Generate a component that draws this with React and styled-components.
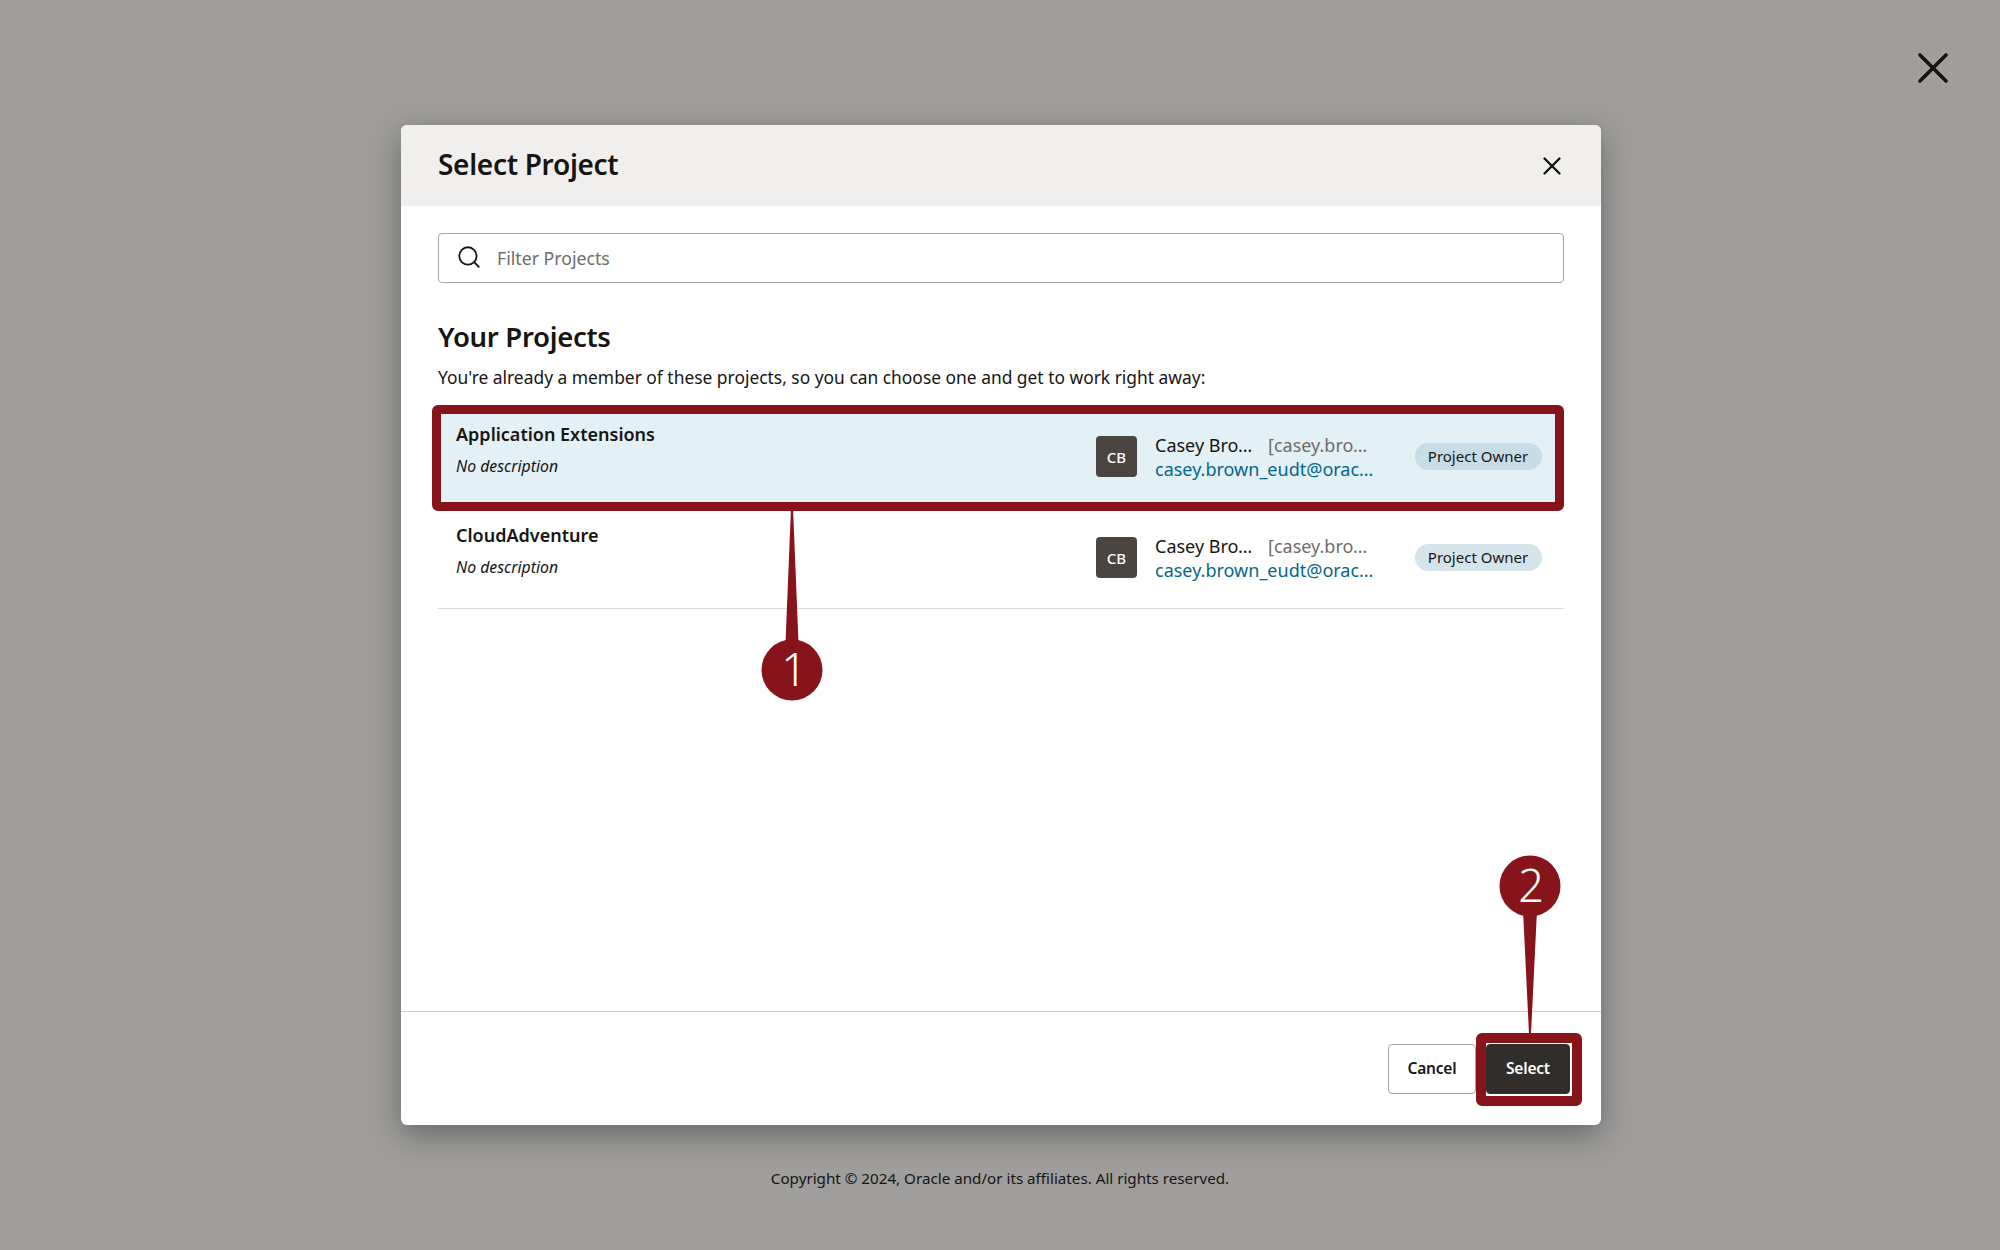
import React from 'react'
import styled, { createGlobalStyle } from 'styled-components'
import { Search, X } from 'lucide-react'

const colors = {
	scrim: '#9f9e9c',
	text: '#161513',
	muted: '#6f6c69',
	line: '#dcdbd9',
	red: '#86141a',
	dark: '#312d2a',
	link: '#04678a',
}

const GlobalStyle = createGlobalStyle`
	html, body {
		margin: 0;
		padding: 0;
		height: 100%;
	}

	body {
		background: ${colors.scrim};
		color: ${colors.text};
		font-family: "Noto Sans", "Open Sans", sans-serif;
	}
`

const Page = styled.div`
	align-items: center;
	box-sizing: border-box;
	display: flex;
	flex-direction: column;
	height: 1250px;
	overflow: hidden;
	padding-top: 125px;
	position: relative;
`

const PageClose = styled.button`
	background: none;
	border: 0;
	color: #161513;
	display: flex;
	padding: 0;
	position: absolute;
	right: 41px;
	top: 42px;
`

const Modal = styled.div`
	background: #fff;
	border-radius: 6px;
	box-shadow: 0 10px 32px rgba(0, 0, 0, 0.35);
	display: flex;
	flex-direction: column;
	height: 1000px;
	margin-left: 2px;
	position: relative;
	width: 1200px;
`

const Header = styled.header`
	align-items: center;
	background: #f1efed;
	border-radius: 6px 6px 0 0;
	box-sizing: border-box;
	display: flex;
	height: 81px;
	justify-content: space-between;
	padding: 0 37px 3px;
`

const Title = styled.h1`
	font-size: 28px;
	font-weight: 600;
	letter-spacing: -0.3px;
	margin: 0;
`

const HeaderClose = styled.button`
	background: none;
	border: 0;
	color: ${colors.text};
	display: flex;
	margin: 3px -3px 0 0;
	padding: 0;
`

const Body = styled.div`
	display: flex;
	flex: 1;
	flex-direction: column;
	padding: 27px 37px 0;
`

const SearchBox = styled.label`
	align-items: center;
	border: 1px solid #a5a3a0;
	border-radius: 4px;
	box-sizing: border-box;
	display: flex;
	gap: 15px;
	height: 50px;
	padding: 0 18px 3px 17px;
`

const SearchInput = styled.input`
	background: none;
	border: 0;
	color: ${colors.text};
	flex: 1;
	font-family: inherit;
	font-size: 17.7px;
	outline: 0;
	padding: 2px 0 0;

	&::placeholder {
		color: ${colors.muted};
		opacity: 1;
	}
`

const Heading = styled.h2`
	font-size: 27.5px;
	font-weight: 600;
	letter-spacing: -0.3px;
	line-height: 34px;
	margin: 37px 0 0;
`

const Intro = styled.p`
	font-size: 17.4px;
	line-height: 24px;
	margin: 11px 0 0;
`

const List = styled.div`
	margin-top: 17px;
`

const Row = styled.div`
	align-items: flex-start;
	background: ${(p) => (p.$selected ? '#e3f0f6' : '#fff')};
	border-bottom: 1px solid ${colors.line};
	box-sizing: border-box;
	display: flex;
	height: ${(p) => (p.$selected ? '103px' : '100px')};
	padding: ${(p) => (p.$selected ? '15px' : '13px')} 22px 0 18px;
	position: relative;
`

/* the annotation frame sits on top of the row and the one below it */
const RowFrame = styled.div`
	border: 9px solid ${colors.red};
	border-radius: 6px;
	bottom: -3px;
	box-sizing: border-box;
	left: -6px;
	position: absolute;
	right: 0;
	top: -1px;
	z-index: 1;
`

const Project = styled.div`
	flex: 1;
	min-width: 0;
`

const ProjectName = styled.div`
	font-size: 18px;
	font-weight: 600;
	line-height: 26px;
`

const ProjectDesc = styled.div`
	font-size: 15.8px;
	font-style: italic;
	line-height: 22px;
	margin-top: 8px;
`

const Avatar = styled.div`
	align-items: center;
	background: #4a4541;
	border-radius: 4px;
	color: #fff;
	display: flex;
	flex: none;
	font-size: 15px;
	font-weight: 500;
	height: 41px;
	justify-content: center;
	margin-top: 15px;
	width: 41px;
`

const Person = styled.div`
	flex: none;
	margin: 12px 0 0 18px;
	width: 222px;
`

const NameLine = styled.div`
	display: flex;
	font-size: 18px;
	gap: 14px;
	line-height: 24px;
	width: 212px;
`

const Clipped = styled.span`
	flex: none;
	overflow: hidden;
	text-overflow: ellipsis;
	white-space: nowrap;
	width: ${(p) => p.$width}px;
`

const Login = styled(Clipped)`
	color: ${colors.muted};
`

const Email = styled.a`
	color: ${colors.link};
	display: block;
	font-size: 18px;
	line-height: 24px;
	overflow: hidden;
	text-decoration: none;
	text-overflow: ellipsis;
	white-space: nowrap;
	width: 219px;
`

const RolePill = styled.span`
	background: ${(p) => (p.$selected ? '#c6dce6' : '#d4e4ea')};
	border-radius: 14px;
	flex: none;
	font-size: 15px;
	line-height: 27px;
	margin: 22px 0 0 38px;
	padding-right: 1px;
	text-align: center;
	width: 126px;
`

const Footer = styled.footer`
	align-items: center;
	border-top: 1px solid #cfcdcb;
	display: flex;
	gap: 10px;
	height: 113px;
	justify-content: flex-end;
	padding: 0 31px 0 0;
`

const Button = styled.button`
	background: ${(p) => (p.$primary ? colors.dark : '#fff')};
	border: 1px solid ${(p) => (p.$primary ? colors.dark : '#a5a3a0')};
	border-radius: 4px;
	box-sizing: border-box;
	color: ${(p) => (p.$primary ? '#fff' : colors.text)};
	font-family: inherit;
	font-size: 15.5px;
	font-weight: 600;
	height: 50px;
	letter-spacing: -0.2px;
	padding: 0 0 2px;
	width: ${(p) => (p.$primary ? '84px' : '88px')};
`

const SelectWrap = styled.div`
	display: flex;
	position: relative;
`

const ButtonFrame = styled.div`
	border: 10px solid ${colors.red};
	border-radius: 6px;
	bottom: -12px;
	left: -10px;
	position: absolute;
	right: -12px;
	top: -11px;
`

const Copyright = styled.p`
	font-size: 15.2px;
	line-height: 22px;
	margin: 42px 0 0;
`

const CalloutMark = styled.svg`
	left: ${(p) => p.$left}px;
	overflow: visible;
	position: absolute;
	top: ${(p) => p.$top}px;
	z-index: 2;
`

const CalloutNumber = styled.text`
	fill: #fff;
	font-family: "Noto Sans", sans-serif;
	font-size: 45px;
	font-weight: 350;
	text-anchor: middle;
`

// circle with a long spike pointing at the thing it is labelling
const Callout = ({ number, left, top, spikeUp }) => (
	<CalloutMark $left={left} $top={top} width="62" height="180" viewBox="0 0 62 180">
		{spikeUp ? (
			<>
				<polygon points="30,-3 32,-3 37.5,132 24.5,132" fill={colors.red} />
				<circle cx="31" cy="159" r="30.5" fill={colors.red} />
				<CalloutNumber x="33" y="175">{number}</CalloutNumber>
			</>
		) : (
			<>
				<circle cx="31" cy="32" r="30.5" fill={colors.red} />
				<polygon points="24,56 38,56 32,180 30,180" fill={colors.red} />
				<CalloutNumber x="32" y="48">{number}</CalloutNumber>
			</>
		)}
	</CalloutMark>
)

const projects = [
	{ name: 'Application Extensions', selected: true },
	{ name: 'CloudAdventure', selected: false },
]

const App = () => (
	<>
		<GlobalStyle />
		<Page>
			<PageClose aria-label="Close">
				<X size={52} strokeWidth={3.6} absoluteStrokeWidth />
			</PageClose>
			<Modal>
				<Header>
					<Title>Select Project</Title>
					<HeaderClose aria-label="Close dialog">
						<X size={30} strokeWidth={2.4} absoluteStrokeWidth />
					</HeaderClose>
				</Header>
				<Body>
					<SearchBox>
						<Search size={26} strokeWidth={1.8} absoluteStrokeWidth />
						<SearchInput placeholder="Filter Projects" />
					</SearchBox>
					<Heading>Your Projects</Heading>
					<Intro>You're already a member of these projects, so you can choose one and get to work right away:</Intro>
					<List>
						{projects.map((project) => (
							<Row key={project.name} $selected={project.selected}>
								<Project>
									<ProjectName>{project.name}</ProjectName>
									<ProjectDesc>No description</ProjectDesc>
								</Project>
								<Avatar>CB</Avatar>
								<Person>
									<NameLine>
										<Clipped $width={99}>Casey Brown</Clipped>
										<Login $width={100}>[casey.brown_eudt]</Login>
									</NameLine>
									<Email>casey.brown_eudt@oracle.com</Email>
								</Person>
								<RolePill $selected={project.selected}>Project Owner</RolePill>
								{project.selected && <RowFrame />}
							</Row>
						))}
					</List>
				</Body>
				<Footer>
					<Button>Cancel</Button>
					<SelectWrap>
						<ButtonFrame />
						<Button $primary>Select</Button>
					</SelectWrap>
				</Footer>
				<Callout number="1" left={360} top={386} spikeUp />
				<Callout number="2" left={1098} top={729} />
			</Modal>
			<Copyright>Copyright © 2024, Oracle and/or its affiliates. All rights reserved.</Copyright>
		</Page>
	</>
)

export default App
